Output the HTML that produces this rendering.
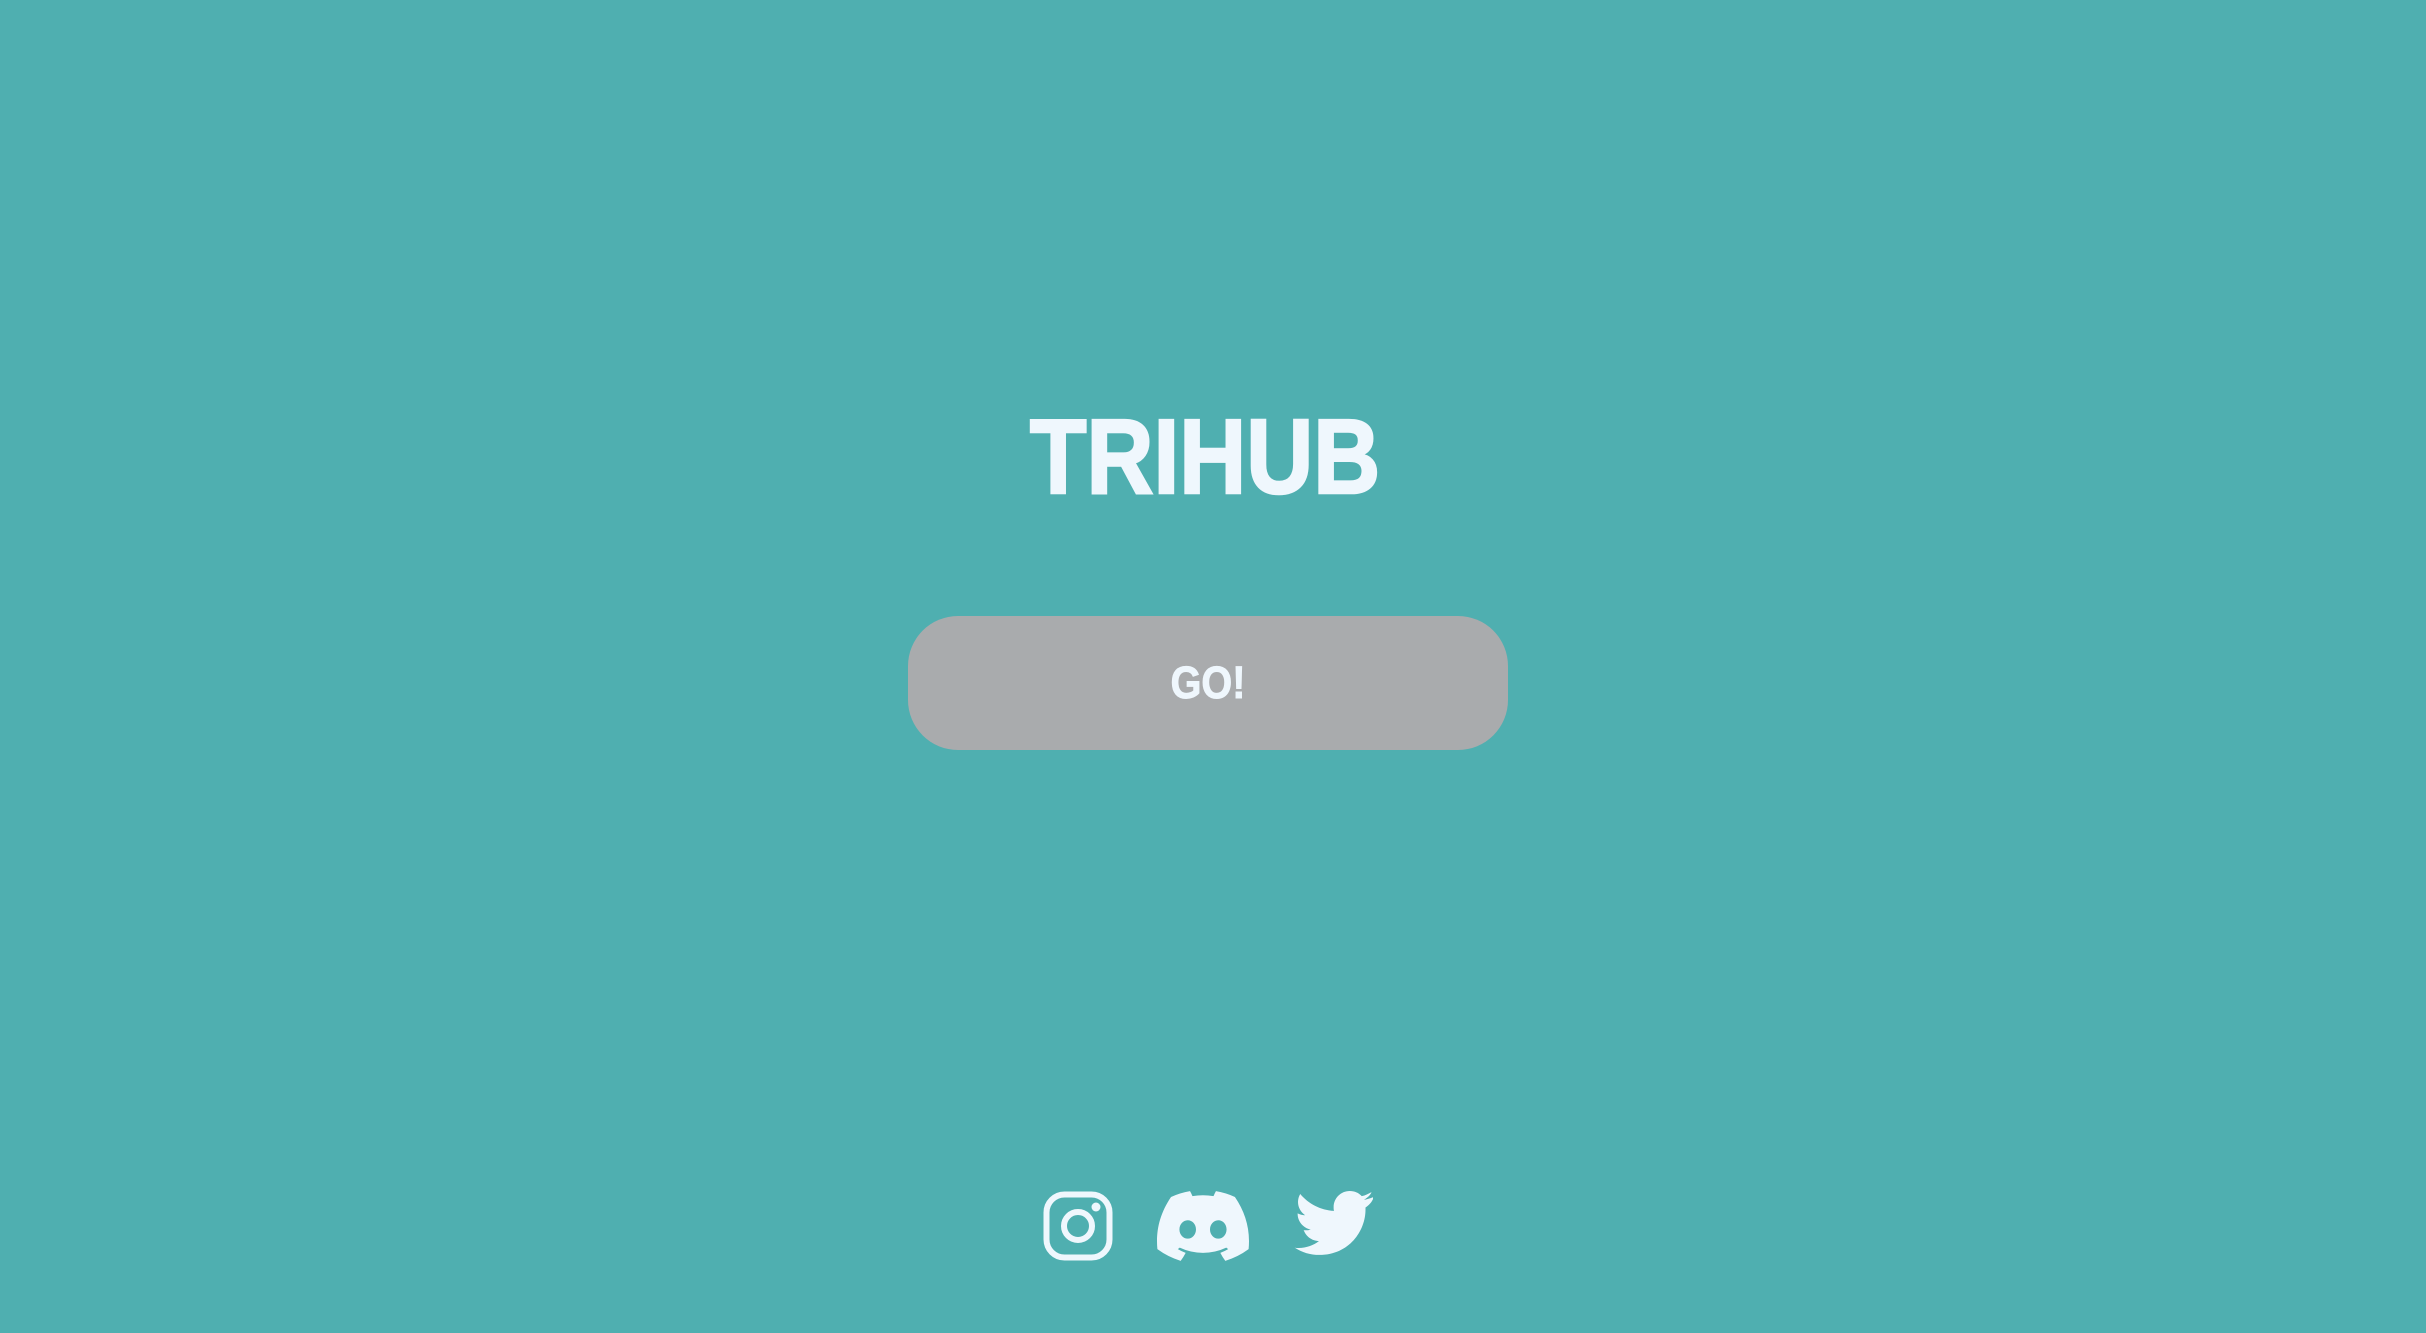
<!DOCTYPE html>
<html><head><meta charset="utf-8"><style>
html,body{margin:0;padding:0}
body{width:2426px;height:1333px;background:#4fafb0;position:relative;overflow:hidden;font-family:"Liberation Sans",sans-serif}
.t{position:absolute;left:905px;top:397px;width:600px;text-align:center;font-weight:bold;font-size:106px;line-height:120px;color:#eff7fd;-webkit-text-stroke:2.5px #eff7fd;transform:scaleX(0.875);transform-origin:center}
.b{position:absolute;left:908px;top:616px;width:600px;height:134px;border-radius:50px;background:#a9abad}
.b span{display:block;color:#eff7fd;font-weight:bold;font-size:45px;line-height:134px;text-align:center;-webkit-text-stroke:1px #eff7fd;transform:scaleX(0.88)}
svg{position:absolute}
</style></head><body>
<div class="t">TRIHUB</div>
<div class="b"><span>GO!</span></div>
<svg style="left:1043px;top:1191px" width="70" height="70" viewBox="0 0 70 70">
<rect x="3.5" y="3.5" width="63" height="63" rx="18" fill="none" stroke="#eff7fd" stroke-width="6"/>
<circle cx="35" cy="35" r="14" fill="none" stroke="#eff7fd" stroke-width="6"/>
<circle cx="53" cy="16" r="4.5" fill="#eff7fd"/>
</svg>
<svg style="left:1157px;top:1191px" width="92" height="70" viewBox="0 0 127.14 96.36">
<path fill="#eff7fd" d="M107.7,8.07A105.15,105.15,0,0,0,81.47,0a72.060,72.060,0,0,0-3.36,6.83A97.68,97.68,0,0,0,49,6.83,72.37,72.37,0,0,0,45.640,0,105.89,105.89,0,0,0,19.390,8.090C2.79,32.65-1.71,56.6.54,80.21h0A105.73,105.73,0,0,0,32.71,96.36,77.7,77.7,0,0,0,39.6,85.25a68.42,68.420,0,0,1-10.85-5.18c.91-.66,1.8-1.340,2.66-2a75.57,75.57,0,0,0,64.32,0c.87.71,1.76,1.39,2.66,2a68.68,68.68,0,0,1-10.87,5.19,77,77,0,0,0,6.89,11.1A105.25,105.25,0,0,0,126.6,80.22h0C129.24,52.84,122.09,29.11,107.7,8.07ZM42.45,65.69C36.18,65.69,31,60,31,53s5-12.74,11.43-12.74S54,46,53.89,53,48.84,65.69,42.45,65.69Zm42.24,0C78.41,65.69,73.250,60,73.250,53s5-12.74,11.44-12.74S96.23,46,96.12,53,91.08,65.69,84.69,65.69Z"/>
</svg>
<svg style="left:1286px;top:1191px" width="87" height="72" viewBox="0.4 0.4 23.2 19.6" preserveAspectRatio="none">
<path fill="#eff7fd" d="M23.6 2.1c-.9.4-1.5.5-2.4.7.9-.6 1.7-1.2 2-2.1-.9.5-1.6.9-2.6 1.1C19.8.9 18.7.4 17.4.4c-2.4 0-4.3 2-4.3 4.4 0 .3 0 .7.1 1C9.6 5.600 6.4 3.9 4.2 1.2c-.4.7-.6 1.4-.6 2.2 0 1.5.8 2.8 1.9 3.6-.7 0-1.4-.2-2-.5v.1c0 2.1 1.5 3.9 3.5 4.3-.4.1-.7.2-1.1.2-.3 0-.6 0-.8-.1.6 1.7 2.2 3 4.1 3-1.5 1.2-3.4 1.9-5.4 1.9-.4 0-.7 0-1.1-.1 1.9 1.3 4.2 2 6.6 2 8 0 12.3-6.6 12.3-12.3v-.6c.8-.6 1.5-1.2 2-2.3z"/>
</svg>
</body></html>
